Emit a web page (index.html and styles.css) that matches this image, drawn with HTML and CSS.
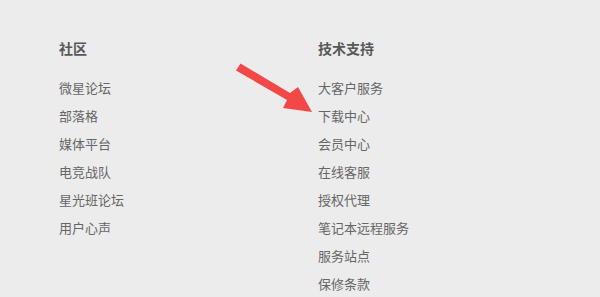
FILE: index.html
```html
<!DOCTYPE html>
<html lang="zh-CN">
<head>
<meta charset="utf-8">
<link rel="stylesheet" href="styles.css">
</head>
<body>
<div class="footer">
  <div class="col col-left">
    <h3 class="title">社区</h3>
    <ul class="links">
      <li>微星论坛</li>
      <li>部落格</li>
      <li>媒体平台</li>
      <li>电竞战队</li>
      <li>星光班论坛</li>
      <li>用户心声</li>
    </ul>
  </div>
  <div class="col">
    <h3 class="title">技术支持</h3>
    <ul class="links">
      <li>大客户服务</li>
      <li>下载中心</li>
      <li>会员中心</li>
      <li>在线客服</li>
      <li>授权代理</li>
      <li>笔记本远程服务</li>
      <li>服务站点</li>
      <li>保修条款</li>
    </ul>
  </div>
  <svg class="arrow" width="600" height="297" viewBox="0 0 600 297">
    <polygon points="240.5,63.5 290,93 298,87 312,112 283,108 287,100 236,70.5" fill="#f44848"/>
  </svg>
</div>
</body>
</html>
```
FILE: styles.css
```css
html, body {
  margin: 0;
  padding: 0;
  background: #ececec;
}
body {
  width: 600px;
  height: 297px;
  overflow: hidden;
  font-family: "Noto Sans CJK SC", "Noto Sans", sans-serif;
}
.footer {
  position: relative;
  display: flex;
  padding: 34px 0 0 59px;
}
.col-left {
  width: 259px;
}
.title {
  margin: 0 0 12px;
  font-size: 14px;
  line-height: 28px;
  font-weight: bold;
  color: #585858;
}
.links {
  list-style: none;
  margin: 0;
  padding: 0;
}
.links li {
  font-size: 13px;
  line-height: 28px;
  color: #666;
}
.arrow {
  position: absolute;
  left: 0;
  top: 0;
}
```
